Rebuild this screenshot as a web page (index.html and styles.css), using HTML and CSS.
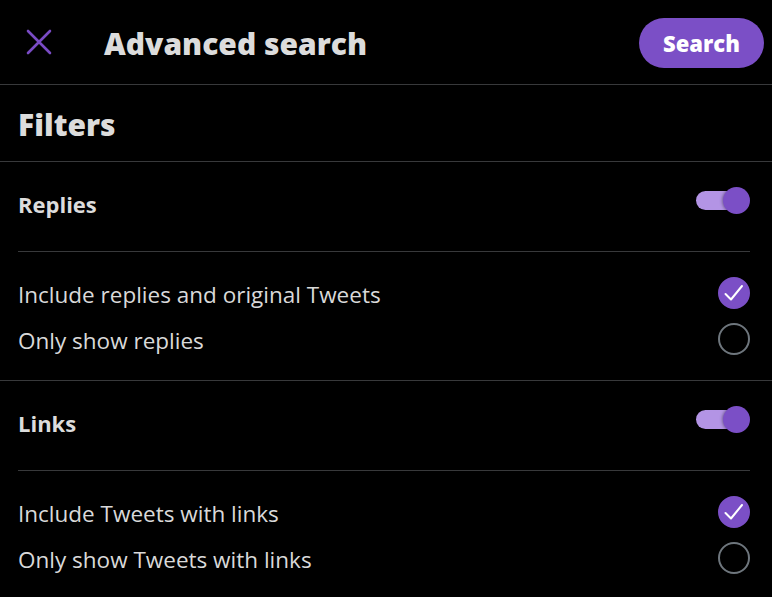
FILE: index.html
```html
<!DOCTYPE html>
<html>
<head>
<meta charset="utf-8">
<link rel="stylesheet" href="styles.css">
</head>
<body>
<div class="page">
  <header class="topbar">
    <div class="close">
      <svg width="26" height="26" viewBox="0 0 26 26"><path d="M2 2 L24 24 M24 2 L2 24" stroke="#794bc4" stroke-width="2.6" stroke-linecap="round" fill="none"/></svg>
    </div>
    <h1 class="title">Advanced search</h1>
    <button class="search-btn">Search</button>
  </header>
  <div class="filters">Filters</div>
  <section class="section">
    <div class="sec-head">
      <span class="sec-title">Replies</span>
      <span class="toggle"><span class="track"></span><span class="thumb"></span></span>
    </div>
    <div class="options">
      <div class="opt"><span>Include replies and original Tweets</span><span class="radio on"><svg width="22" height="22" viewBox="0 0 22 22"><path d="M2.5 12 L8 17.5 L19 4" stroke="#fff" stroke-width="2" fill="none" stroke-linecap="round" stroke-linejoin="round"/></svg></span></div>
      <div class="opt"><span>Only show replies</span><span class="radio"></span></div>
    </div>
  </section>
  <section class="section">
    <div class="sec-head">
      <span class="sec-title">Links</span>
      <span class="toggle"><span class="track"></span><span class="thumb"></span></span>
    </div>
    <div class="options">
      <div class="opt"><span>Include Tweets with links</span><span class="radio on"><svg width="22" height="22" viewBox="0 0 22 22"><path d="M2.5 12 L8 17.5 L19 4" stroke="#fff" stroke-width="2" fill="none" stroke-linecap="round" stroke-linejoin="round"/></svg></span></div>
      <div class="opt"><span>Only show Tweets with links</span><span class="radio"></span></div>
    </div>
  </section>
</div>
</body>
</html>
```

FILE: styles.css
```css
* { box-sizing: border-box; }
html, body { margin: 0; padding: 0; background: #000; }
body { font-family: "Open Sans", "Noto Sans", sans-serif; color: #d9d9d9; }
.page { width: 772px; height: 597px; overflow: hidden; }
.topbar {
  height: 85px;
  display: flex;
  align-items: center;
  padding: 0 8px 0 26px;
  border-bottom: 1px solid #38393b;
}
.close { width: 26px; height: 26px; display: flex; }
.title {
  margin: 2px 0 0 52px;
  font-size: 30px;
  font-weight: 800;
  color: #dcdcdc;
  flex: 1;
  letter-spacing: 0;
}
.search-btn {
  height: 50px;
  width: 125px;
  border: none;
  border-radius: 25px;
  background: #7b4fc6;
  color: #fff;
  font-family: inherit;
  font-size: 22px;
  font-weight: 800;
  margin-top: 2px;
}
.filters {
  height: 77px;
  padding: 3px 18px 0;
  display: flex;
  align-items: center;
  font-size: 30px;
  font-weight: 800;
  color: #dcdcdc;
  border-bottom: 1px solid #38393b;
}
.section { border-bottom: 1px solid #38393b; }
.section:last-child { border-bottom: none; }
.sec-head {
  height: 90px;
  margin: 0 22px 0 18px;
  display: flex;
  align-items: center;
  justify-content: space-between;
  border-bottom: 1px solid #38393b;
}
.sec-title { font-size: 22px; font-weight: 700; color: #dcdcdc; margin-top: -6px; }
.toggle { position: relative; width: 54px; height: 27px; margin-top: -12px; }
.track {
  position: absolute; left: 0; top: 4px; width: 44px; height: 19px;
  border-radius: 10px; background: #b394e5;
}
.thumb {
  position: absolute; right: 0; top: 0; width: 27px; height: 27px;
  border-radius: 50%; background: #7b4fc6;
  box-shadow: -1px 0 3px rgba(0,0,0,0.35);
}
.options { padding: 18px 22px 18px 18px; }
.opt {
  height: 46px;
  display: flex;
  align-items: center;
  justify-content: space-between;
  font-size: 22.5px;
  color: #d9d9d9;
}
.opt span:first-child { margin-top: 3px; }
.radio {
  width: 32px; height: 32px; border-radius: 50%;
  border: 2px solid #6e767d;
  display: flex; align-items: center; justify-content: center;
}
.radio.on { background: #7b4fc6; border-color: #7b4fc6; }
```
